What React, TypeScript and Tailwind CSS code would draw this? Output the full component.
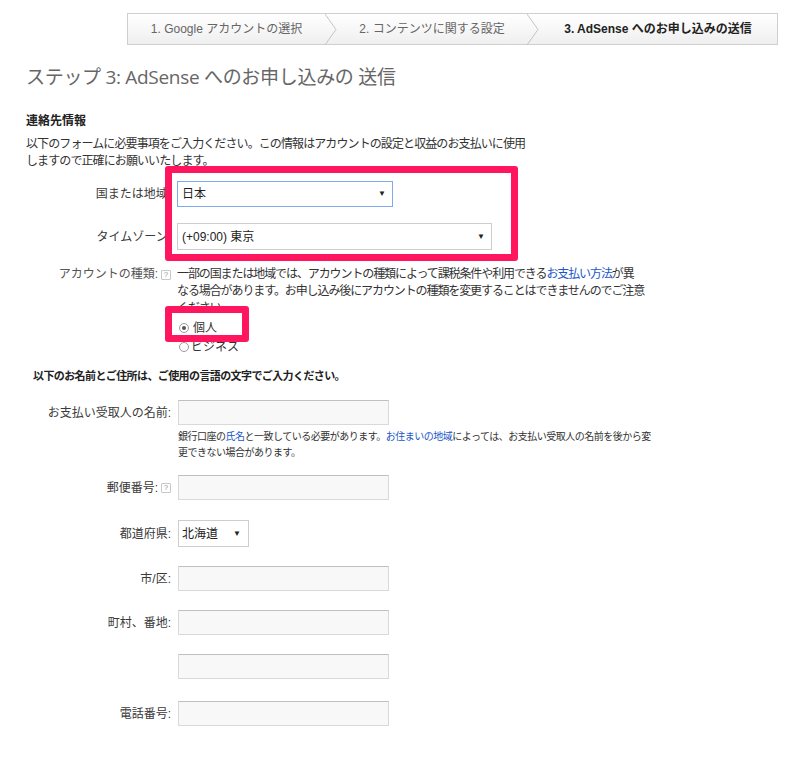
import React from 'react';

function Help() {
    return (
        <span className="inline-flex items-center justify-center w-[10px] h-[10px] border border-[#c8c8c8] rounded-[1px] text-[8px] leading-none text-[#999] ml-[3px] font-['Liberation_Sans',sans-serif]">?</span>
    );
}

function Chevron() {
    return (
        <svg width="12" height="31" viewBox="0 0 12 31" className="shrink-0">
            <path d="M0 0 L11 15.5 L0 31" fill="none" stroke="#c4c4c4" strokeWidth="1" />
        </svg>
    );
}

function TextInput({ w = 211 }: { w?: number }) {
    return <div className="h-[25px] bg-[#f8f8f8] border border-[#d9d9d9] border-t-[#c0c0c0]" style={{ width: w }} />;
}

function Row({ label, help, top, children }: { label: string; help?: boolean; top: string; children: React.ReactNode }) {
    return (
        <div className={`flex items-center ${top}`}>
            <div className="w-[171px] shrink-0 flex items-center justify-end text-[12px] text-[#3a3a3a]">
                <span>{label}</span>
                {help && <Help />}
            </div>
            <div className="ml-[7px]">{children}</div>
        </div>
    );
}

export default function App() {
    return (
        <div className="relative w-[800px] h-[765px] overflow-hidden bg-white text-[#222] font-['Liberation_Sans','Noto_Sans_CJK_JP',sans-serif]">
            {/* step bar */}
            <div className="pt-[13px]">
                <div className="ml-[127px] w-[651px] h-[32px] flex border border-[#cfcfcf] bg-linear-to-b from-white to-[#efefef] text-[12px]">
                    <div className="w-[197px] flex items-center justify-center text-[#666]">1. Google アカウントの選択</div>
                    <Chevron />
                    <div className="w-[190px] flex items-center justify-center text-[#666]">2. コンテンツに関する設定</div>
                    <Chevron />
                    <div className="flex-1 flex items-center justify-center font-bold text-[#222]">3. AdSense へのお申し込みの送信</div>
                </div>
            </div>

            {/* title */}
            <h1 className="mt-[18px] ml-[26px] text-[19px] leading-[28px] tracking-[-0.3px] text-[#666] font-['Open_Sans','Noto_Sans_CJK_JP',sans-serif]">
                ステップ 3: AdSense へのお申し込みの 送信
            </h1>

            <div className="mt-[22px] ml-[26px] text-[12px] leading-[17px] font-bold text-[#222]">連絡先情報</div>
            <p className="mt-[6px] ml-[26px] text-[12px] leading-[17px] tracking-[-0.9px] text-[#333] whitespace-nowrap">
                以下のフォームに必要事項をご入力ください。この情報はアカウントの設定と収益のお支払いに使用<br />
                しますので正確にお願いいたします。
            </p>

            <Row label="国または地域:" top="mt-[11px]">
                <div className="-ml-[1px] w-[216px] h-[26px] border border-[#7eaaf0] bg-white flex items-center justify-between px-[4px] text-[12px]">
                    <span>日本</span>
                    <span className="text-[8px] mr-[2px]">▼</span>
                </div>
            </Row>

            <Row label="タイムゾーン:" top="mt-[16px]">
                <div className="-ml-[1px] w-[315px] h-[27px] border border-[#cdcdcd] bg-white flex items-center justify-between px-[4px] text-[12px]">
                    <span>(+09:00) 東京</span>
                    <span className="text-[8px] mr-[2px]">▼</span>
                </div>
            </Row>

            <div className="flex items-start mt-[16px]">
                <div className="w-[171px] shrink-0 flex items-center justify-end text-[12px] leading-[17px] text-[#555]">
                    <span>アカウントの種類:</span>
                    <Help />
                </div>
                <div className="ml-[6px] text-[12px] leading-[17px] tracking-[-1.1px] text-[#333] whitespace-nowrap">
                    一部の国または地域では、アカウントの種類によって課税条件や利用できる<span className="text-[#1a57c9]">お支払い方法</span>が異<br />
                    なる場合があります。お申し込み後にアカウントの種類を変更することはできませんのでご注意<br />
                    ください。
                </div>
            </div>

            <div className="ml-[179px] mt-[1px] text-[12px] text-[#333]">
                <div className="flex items-center h-[19px]">
                    <span className="w-[10px] h-[10px] rounded-full border border-[#9a9a9a] bg-white flex items-center justify-center">
                        <span className="w-[4px] h-[4px] rounded-full bg-[#555]" />
                    </span>
                    <span className="ml-[4px]">個人</span>
                </div>
                <div className="flex items-center h-[19px]">
                    <span className="w-[10px] h-[10px] rounded-full border border-[#9a9a9a] bg-white" />
                    <span className="ml-[2px]">ビジネス</span>
                </div>
            </div>

            <div className="mt-[12px] ml-[33px] text-[11px] leading-[17px] tracking-[-0.6px] font-bold text-[#222]">
                以下のお名前とご住所は、ご使用の言語の文字でご入力ください。
            </div>

            <Row label="お支払い受取人の名前:" top="mt-[15px]">
                <div className="h-[26px]"><TextInput /></div>
            </Row>
            <p className="mt-[3px] ml-[178px] text-[10px] leading-[16px] tracking-[-0.5px] text-[#333] whitespace-nowrap">
                銀行口座の<span className="text-[#1a57c9]">氏名</span>と一致している必要があります。<span className="text-[#1a57c9]">お住まいの地域</span>によっては、お支払い受取人の名前を後から変<br />
                更できない場合があります。
            </p>

            <Row label="郵便番号:" help top="mt-[14px]">
                <TextInput />
            </Row>

            <Row label="都道府県:" top="mt-[20px]">
                <div className="w-[71px] h-[27px] border border-[#cdcdcd] bg-white flex items-center justify-between px-[3px] text-[12px]">
                    <span>北海道</span>
                    <span className="text-[8px] mr-[4px]">▼</span>
                </div>
            </Row>

            <Row label="市/区:" top="mt-[19px]">
                <TextInput />
            </Row>

            <Row label="町村、番地:" top="mt-[19px]">
                <TextInput />
            </Row>

            <Row label="" top="mt-[19px]">
                <TextInput />
            </Row>

            <Row label="電話番号:" top="mt-[22px]">
                <TextInput />
            </Row>

            {/* highlight boxes */}
            <div className="absolute left-[165px] top-[166px] w-[353px] h-[95px] border-[7px] border-[#ff165e] rounded-[3px]" />
            <div className="absolute left-[165px] top-[306px] w-[84px] h-[36px] border-[7px] border-[#ff165e] rounded-[3px]" />
        </div>
    );
}
